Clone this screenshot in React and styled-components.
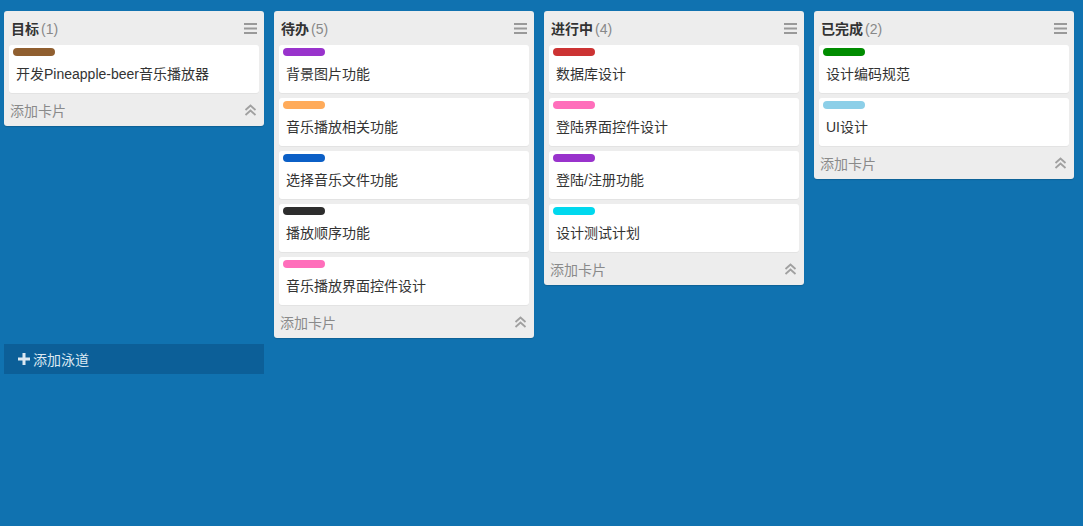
import React from "react";
import styled, { createGlobalStyle } from "styled-components";

const GlobalStyle = createGlobalStyle`
  html, body { margin: 0; padding: 0; }
  body {
    background: #1072b0;
    font-family: "Liberation Sans", "Noto Sans CJK SC", Arial, sans-serif;
    font-size: 14px;
    color: #333;
  }
`;

const Board = styled.div`
  min-height: 526px;
  padding: 11px 4px 0;
  box-sizing: border-box;
`;

const Lanes = styled.div`
  display: flex;
  align-items: flex-start;
  gap: 10px;
`;

const Lane = styled.div`
  width: 260px;
  background: #ededed;
  border-radius: 3px;
  box-shadow: 0 1px 1px rgba(0, 0, 0, 0.15);
  display: flex;
  flex-direction: column;
`;

const LaneHeader = styled.div`
  height: 34px;
  display: flex;
  align-items: center;
  justify-content: space-between;
  padding: 0 7px 0 7px;
`;

const Title = styled.div`
  font-weight: bold;
  font-size: 14px;
  color: #333;
`;

const Count = styled.span`
  font-weight: normal;
  color: #888;
  margin-left: 2px;
`;

const Cards = styled.div`
  display: flex;
  flex-direction: column;
  gap: 5px;
  padding: 0 5px;
`;

const Card = styled.div`
  background: #fff;
  border-radius: 3px;
  padding: 3px 4px 0;
  box-shadow: 0 1px 0 rgba(0, 0, 0, 0.04);
`;

const Label = styled.div`
  width: 42px;
  height: 8px;
  border-radius: 4px;
  background: ${(p) => p.$color};
`;

const CardText = styled.div`
  padding: 8px 3px 9px;
  line-height: 20px;
  font-size: 14px;
  color: #333;
`;

const LaneFooter = styled.div`
  height: 33px;
  display: flex;
  align-items: center;
  justify-content: space-between;
  padding: 0 7px 0 6px;
  color: #8a8a8a;
  font-size: 14px;
`;

const IconBtn = styled.span`
  display: inline-flex;
  color: #999;
`;

const AddLane = styled.div`
  margin-top: 6px;
  width: 260px;
  height: 30px;
  background: #0c5f98;
  color: #dbe8f2;
  display: flex;
  align-items: center;
  gap: 3px;
  padding-left: 14px;
  box-sizing: border-box;
  font-size: 14px;
`;

const MenuIcon = () => (
  <svg width="13" height="11" viewBox="0 0 13 11">
    <rect x="0" y="0" width="13" height="2" fill="#999" />
    <rect x="0" y="4.5" width="13" height="2" fill="#999" />
    <rect x="0" y="9" width="13" height="2" fill="#999" />
  </svg>
);

const ChevronsUp = () => (
  <svg width="13" height="12" viewBox="0 0 13 12" fill="none" stroke="#a0a0a0" strokeWidth="1.8">
    <polyline points="1.5,6 6.5,1.5 11.5,6" />
    <polyline points="1.5,11 6.5,6.5 11.5,11" />
  </svg>
);

const PlusIcon = () => (
  <svg width="12" height="12" viewBox="0 0 12 12">
    <rect x="4.5" y="0" width="3" height="12" fill="#dbe8f2" />
    <rect x="0" y="4.5" width="12" height="3" fill="#dbe8f2" />
  </svg>
);

const lanes = [
  {
    title: "目标",
    cards: [{ color: "#905f30", text: "开发Pineapple-beer音乐播放器" }],
  },
  {
    title: "待办",
    cards: [
      { color: "#9933cc", text: "背景图片功能" },
      { color: "#ffab5a", text: "音乐播放相关功能" },
      { color: "#0b5fc6", text: "选择音乐文件功能" },
      { color: "#2d2d2d", text: "播放顺序功能" },
      { color: "#ff6ebb", text: "音乐播放界面控件设计" },
    ],
  },
  {
    title: "进行中",
    cards: [
      { color: "#cc3333", text: "数据库设计" },
      { color: "#ff6ebb", text: "登陆界面控件设计" },
      { color: "#9933cc", text: "登陆/注册功能" },
      { color: "#00d8ee", text: "设计测试计划" },
    ],
  },
  {
    title: "已完成",
    cards: [
      { color: "#008c00", text: "设计编码规范" },
      { color: "#8ccfe8", text: "UI设计" },
    ],
  },
];

export default function App() {
  return (
    <>
      <GlobalStyle />
      <Board>
        <Lanes>
          {lanes.map((lane) => (
            <Lane key={lane.title}>
              <LaneHeader>
                <Title>
                  {lane.title}
                  <Count>({lane.cards.length})</Count>
                </Title>
                <IconBtn>
                  <MenuIcon />
                </IconBtn>
              </LaneHeader>
              <Cards>
                {lane.cards.map((c) => (
                  <Card key={c.text}>
                    <Label $color={c.color} />
                    <CardText>{c.text}</CardText>
                  </Card>
                ))}
              </Cards>
              <LaneFooter>
                <span>添加卡片</span>
                <IconBtn>
                  <ChevronsUp />
                </IconBtn>
              </LaneFooter>
            </Lane>
          ))}
        </Lanes>
        <AddLane>
          <PlusIcon />
          <span>添加泳道</span>
        </AddLane>
      </Board>
    </>
  );
}
